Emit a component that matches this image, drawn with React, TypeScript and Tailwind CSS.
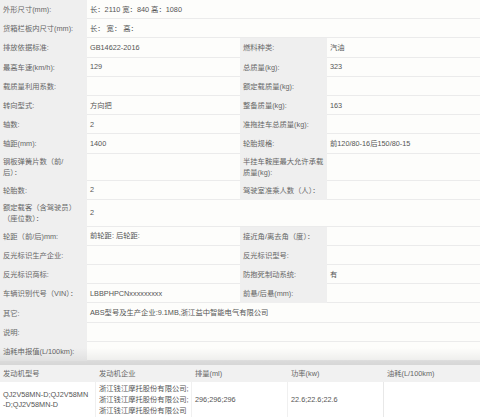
import React from "react"

type Cell = { label: React.ReactNode; value?: React.ReactNode }

const font = { fontFamily: '"Liberation Sans", "Noto Sans CJK SC", sans-serif' }

const labelCls =
    "bg-[#efefef] pl-[3px] py-[2.5px] flex items-center min-h-[19.2px] whitespace-nowrap text-[#666]"
const valueCls =
    "bg-[#fdfdfb] border-b border-[#ebebeb] pl-[3px] py-[2.5px] flex items-center min-h-[19.2px] whitespace-nowrap text-[#555]"

const FullRow = ({ label, value }: Cell) => (
    <div className="grid grid-cols-[87px_393px]">
        <div className={labelCls}>{label}</div>
        <div className={valueCls}>{value}</div>
    </div>
)

const PairRow = ({ left, right }: { left: Cell; right: Cell }) => (
    <div className="grid grid-cols-[87px_153px_87px_153px]">
        <div className={labelCls}>{left.label}</div>
        <div className={valueCls}>{left.value}</div>
        <div className={labelCls}>{right.label}</div>
        <div className={valueCls}>{right.value}</div>
    </div>
)

const pairs: { left: Cell; right: Cell }[] = [
    { left: { label: "排放依据标准:", value: "GB14622-2016" }, right: { label: "燃料种类:", value: "汽油" } },
    { left: { label: "最高车速(km/h):", value: "129" }, right: { label: "总质量(kg):", value: "323" } },
    { left: { label: "载质量利用系数:" }, right: { label: "额定载质量(kg):" } },
    { left: { label: "转向型式:", value: "方向把" }, right: { label: "整备质量(kg):", value: "163" } },
    { left: { label: "轴数:", value: "2" }, right: { label: "准拖挂车总质量(kg):" } },
    { left: { label: "轴距(mm):", value: "1400" }, right: { label: "轮胎规格:", value: "前120/80-16后150/80-15" } },
    {
        left: { label: <span>钢板弹簧片数（前/<br />后）：</span> },
        right: { label: <span>半挂车鞍座最大允许承载<br />质量(kg):</span> },
    },
    { left: { label: "轮胎数:", value: "2" }, right: { label: "驾驶室准乘人数（人）：" } },
]

const pairs2: { left: Cell; right: Cell }[] = [
    { left: { label: "轮距（前/后)mm:", value: "前轮距: 后轮距:" }, right: { label: "接近角/离去角（度）：" } },
    { left: { label: "反光标识生产企业:" }, right: { label: "反光标识型号:" } },
    { left: { label: "反光标识商标:" }, right: { label: "防抱死制动系统:", value: "有" } },
    { left: { label: "车辆识别代号（VIN）：", value: "LBBPHPCNxxxxxxxxx" }, right: { label: "前悬/后悬(mm):" } },
]

const engineHead = ["发动机型号", "发动机企业", "排量(ml)", "功率(kw)", "油耗(L/100km)"]

export default function App() {
    return (
        <div className="w-[480px] h-[418px] overflow-hidden bg-white text-[7.3px] leading-[11px]" style={font}>
            <FullRow label="外形尺寸(mm):" value="长：2110 宽：840 高：1080" />
            <FullRow label="货箱栏板内尺寸(mm):" value="长： 宽： 高：" />
            {pairs.map((p, i) => (
                <PairRow key={i} left={p.left} right={p.right} />
            ))}
            <FullRow label={<span>额定载客（含驾驶员）<br />（座位数）：</span>} value="2" />
            {pairs2.map((p, i) => (
                <PairRow key={i} left={p.left} right={p.right} />
            ))}
            <FullRow label="其它:" value="ABS型号及生产企业:9.1MB,浙江益中智能电气有限公司" />
            <FullRow label="说明:" />

            {/* last row fades under the engine table header */}
            <div className="relative">
                <FullRow label="油耗申报值(L/100km):" />
                <div className="h-[4px] bg-[#e9e9e9]" />
                <div className="absolute inset-x-0 top-[6px] bottom-0 bg-gradient-to-b from-transparent to-black/[0.08] pointer-events-none" />
            </div>

            {/* Engine table */}
            <div className="grid grid-cols-5 bg-[#f1f1f1] text-[#666]">
                {engineHead.map((h) => (
                    <div key={h} className="pl-[3px] h-[17px] flex items-center">
                        {h}
                    </div>
                ))}
            </div>
            <div className="grid grid-cols-5 bg-white text-[#555]">
                <div className="pl-[3px] py-[1px] flex items-center border-r border-[#f0f0f0] leading-[10px]">
                    <span>QJ2V58MN-D;QJ2V58MN<br />-D;QJ2V58MN-D</span>
                </div>
                <div className="pl-[3px] py-[1px] flex items-center border-r border-[#f0f0f0] whitespace-nowrap">
                    <span>
                        浙江钱江摩托股份有限公司;<br />
                        浙江钱江摩托股份有限公司;<br />
                        浙江钱江摩托股份有限公司
                    </span>
                </div>
                <div className="pl-[3px] flex items-center border-r border-[#f0f0f0]">296;296;296</div>
                <div className="pl-[3px] flex items-center border-r border-[#e8e8e8]">22.6;22.6;22.6</div>
                <div className="pl-[3px] flex items-center" />
            </div>
        </div>
    )
}
